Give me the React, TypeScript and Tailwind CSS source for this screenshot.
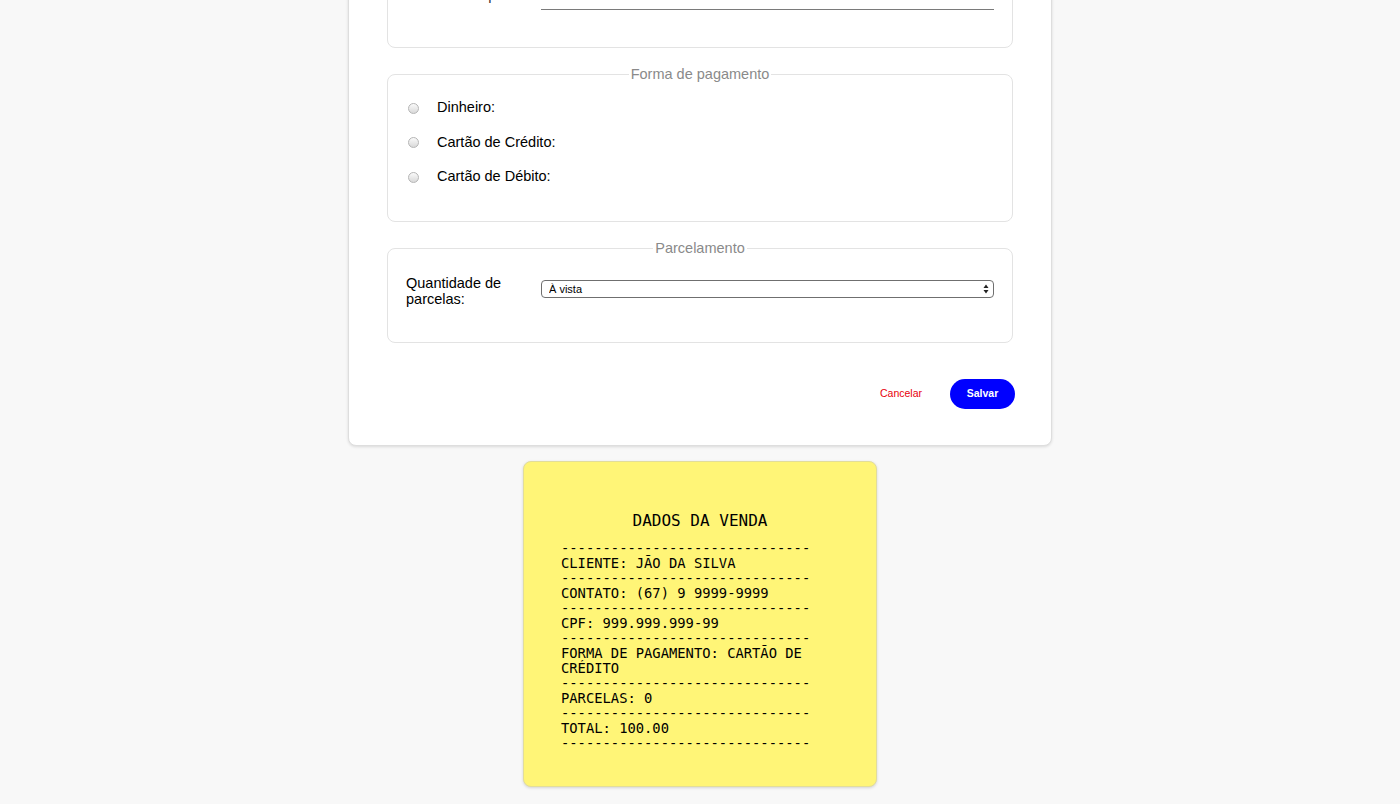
import { useState } from "react";

type Pagamento = "dinheiro" | "credito" | "debito";

const DASHES = "------------------------------";

export default function App() {
  const [pagamento, setPagamento] = useState<Pagamento | null>(null);
  const [parcelas, setParcelas] = useState("0");

  const opcoes: { id: Pagamento; label: string }[] = [
    { id: "dinheiro", label: "Dinheiro:" },
    { id: "credito", label: "Cartão de Crédito:" },
    { id: "debito", label: "Cartão de Débito:" },
  ];

  const campos = ["Cliente:", "Contato:", "CPF:", "Total da compra:"];

  return (
    <div className="min-h-screen bg-[#f8f8f8] overflow-hidden font-['Liberation_Sans',Arial,sans-serif]">
      {/* ---------- FORM ---------- */}
      <div className="w-[704px] mx-auto -mt-[244px] bg-white border border-[#dedede] rounded-lg shadow-[0_1px_3px_rgba(0,0,0,0.12)] px-[38px] pt-[38px] pb-[36px]">
        <fieldset className="border border-[#e3e3e3] rounded-lg px-[18px] pb-[36px]">
          <legend className="mx-auto px-[2px] text-[14.5px] leading-[17px] text-[#8a8a8a]">
            Dados do cliente
          </legend>
          <div className="flex flex-col gap-[18px] pt-[17px]">
            {campos.map(c => (
              <div key={c} className="flex items-center h-[32px]">
                <label className="w-[135px] text-[14.5px] leading-[16px] text-[#333]">{c}</label>
                <input className="flex-1 h-[30px] border-b border-[#7a7a7a] outline-none text-[13px]" />
              </div>
            ))}
          </div>
        </fieldset>

        <fieldset className="mt-[18px] border border-[#e3e3e3] rounded-lg px-[20px] pb-[35px]">
          <legend className="mx-auto px-[2px] text-[14.5px] leading-[17px] text-[#8a8a8a]">
            Forma de pagamento
          </legend>
          <div className="flex flex-col gap-[16.5px] pt-[16px]">
            {opcoes.map(o => (
              <label key={o.id} className="flex items-center h-[18px] cursor-pointer">
                <input
                  type="radio"
                  name="pagamento"
                  checked={pagamento === o.id}
                  onChange={() => setPagamento(o.id)}
                  className="appearance-none w-[11px] h-[11px] rounded-full border border-[#b5b5b5] bg-gradient-to-b from-[#fafafa] to-[#d9d9d9] checked:bg-[#2f7cf6] checked:border-[#2f7cf6]"
                />
                <span className="ml-[18px] text-[14.5px] text-black">{o.label}</span>
              </label>
            ))}
          </div>
        </fieldset>

        <fieldset className="mt-[18px] border border-[#e3e3e3] rounded-lg px-[18px] pb-[35px]">
          <legend className="mx-auto px-[2px] text-[14.5px] leading-[17px] text-[#8a8a8a]">
            Parcelamento
          </legend>
          <div className="flex items-center pt-[18px]">
            <label className="w-[135px] pr-[20px] text-[14.5px] leading-[16px] text-black">
              Quantidade de parcelas:
            </label>
            <div className="relative flex-1 -mt-[5px]">
              <select
                value={parcelas}
                onChange={e => setParcelas(e.target.value)}
                className="block appearance-none w-full h-[18px] border border-[#6f6f6f] rounded-[4px] bg-white pl-[7px] text-[11px] leading-[16px] text-black outline-none"
              >
                <option value="0">À vista</option>
                <option value="2">2x</option>
                <option value="3">3x</option>
              </select>
              <svg
                className="absolute right-[5px] top-[4px] pointer-events-none"
                width="6"
                height="10"
                viewBox="0 0 6 10"
              >
                <path d="M3 0.5 L5.5 4 H0.5 Z" fill="#222" />
                <path d="M3 9.5 L5.5 6 H0.5 Z" fill="#222" />
              </svg>
            </div>
          </div>
        </fieldset>

        <div className="flex items-center justify-end mt-[36px] -mr-[2px]">
          <button className="text-[10.5px] text-[#e8000b] mr-[28px]">Cancelar</button>
          <button className="w-[65px] h-[30px] rounded-full bg-[#0000ff] text-white text-[10.5px] font-bold">
            Salvar
          </button>
        </div>
      </div>

      {/* ---------- RECIBO ---------- */}
      <div className="w-[354px] mx-auto mt-[15px] bg-[#fff577] border border-[#e2dd9a] rounded-lg shadow-[0_1px_3px_rgba(0,0,0,0.15)] pt-[50px] pb-[35px] pl-[37px] font-['DejaVu_Sans_Mono',monospace] text-black">
        <div className="text-center -ml-[37px] text-[16px] leading-[18px] mb-[11px]">DADOS DA VENDA</div>
        <div className="w-[252px] text-[13.8px] leading-[15px] whitespace-pre-wrap">
          <div>{DASHES}</div>
          <div>CLIENTE: JÃO DA SILVA</div>
          <div>{DASHES}</div>
          <div>CONTATO: (67) 9 9999-9999</div>
          <div>{DASHES}</div>
          <div>CPF: 999.999.999-99</div>
          <div>{DASHES}</div>
          <div>FORMA DE PAGAMENTO: CARTÃO DE CRÉDITO</div>
          <div>{DASHES}</div>
          <div>PARCELAS: {parcelas}</div>
          <div>{DASHES}</div>
          <div>TOTAL: 100.00</div>
          <div>{DASHES}</div>
        </div>
      </div>
      <div className="h-[18px]" />
    </div>
  );
}
